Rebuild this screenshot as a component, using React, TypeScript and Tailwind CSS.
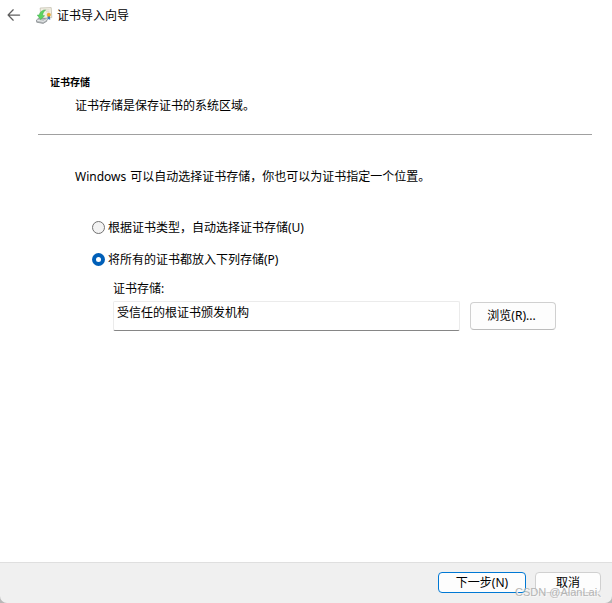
import React from "react";

function BackArrow() {
  return (
    <svg className="ml-[7px] h-[14px] w-[14px]" viewBox="0 0 14 14" fill="none" stroke="#5f5f5f" strokeWidth="1.25" strokeLinecap="round" strokeLinejoin="round">
      <path d="M1.2 7H12.6M6.2 1.8L1.1 7L6.2 12.2" />
    </svg>
  );
}

function CertificateIcon() {
  return (
    <svg className="ml-[15px] h-[17px] w-[17px]" viewBox="0 0 17 17">
      <path d="M4.2 1L15.2 .6L15.8 10.6L4.8 11.4Z" fill="#f3f0e4" stroke="#c4c0b0" strokeWidth=".8" />
      <path d="M7 3L13.5 2.8M10 4.8L13.5 4.7" stroke="#d5d1c3" strokeWidth=".8" />
      <path d="M11.7 9L11.4 13L12.7 12L14.2 13L14 9Z" fill="#3f78b8" />
      <circle cx="12.8" cy="7.8" r="1.8" fill="#f2ad22" stroke="#d8962a" strokeWidth=".4" />
      <path d="M.5 13L3.4 10.6L11 12L10.8 14.2L7.2 16.4L.7 15.2Z" fill="#b9bdbf" stroke="#7d8285" strokeWidth=".7" />
      <path d="M1.1 13.2L7.3 14.4L10.8 12.4" fill="none" stroke="#f1f3f4" strokeWidth=".9" />
      <path d="M9.6 2.9C5.6 3.2 3.6 5.3 3.3 8L1.3 8L4.6 12.6L8.6 8.8L6.5 8.4C6.7 6.2 7.7 4.7 9.6 2.9Z" fill="#5cd460" stroke="#35ad45" strokeWidth=".5" />
    </svg>
  );
}

function Radio({ checked = false, children }: { checked?: boolean; children: React.ReactNode }) {
  return (
    <label className="flex h-4 items-center gap-[3px]">
      {checked ? (
        <span className="flex size-[13px] shrink-0 items-center justify-center rounded-full bg-[#005fb8]">
          <span className="size-[5px] rounded-full bg-white" />
        </span>
      ) : (
        <span className="size-[13px] shrink-0 rounded-full border border-[#727272] bg-[#f3f3f3]" />
      )}
      <span className="pt-0.5">{children}</span>
    </label>
  );
}

export default function App() {
  return (
    <div className="relative flex h-[603px] w-[612px] flex-col overflow-hidden bg-[#b8b8b8] font-['Noto_Sans','Noto_Sans_CJK_SC',sans-serif] text-xs leading-4 whitespace-nowrap text-black">
      <header className="flex h-[30px] shrink-0 items-center bg-white">
        <BackArrow />
        <CertificateIcon />
        <h1 className="ml-1 pt-0.5">证书导入向导</h1>
      </header>
      <main className="flex flex-1 flex-col bg-white">
        <section className="mr-5 ml-[38px] h-[105px] border-b border-[#a0a0a0] pt-11 pl-3">
          <h2 className="text-[10px] leading-4 font-bold">证书存储</h2>
          <p className="mt-2 ml-[25px]">证书存储是保存证书的系统区域。</p>
        </section>
        <p className="mt-[34px] ml-[75px] [word-spacing:1px]">Windows 可以自动选择证书存储，你也可以为证书指定一个位置。</p>
        <div className="mt-[34px] ml-[92px] flex flex-col gap-4">
          <Radio>根据证书类型，自动选择证书存储(U)</Radio>
          <Radio checked>将所有的证书都放入下列存储(P)</Radio>
        </div>
        <div className="mt-[14px] ml-[113px]">
          <div>证书存储:</div>
          <div className="mt-1 flex items-center gap-[10px]">
            <div className="h-[30px] w-[347px] rounded-[2px] border border-[#ebebeb] border-b-[#868686] pt-[3px] pl-[3px]">受信任的根证书颁发机构</div>
            <button className="h-7 w-[86px] rounded-[4px] border border-[#d0d0d0] border-b-[#bcbcbc] bg-[#fdfdfd] pr-[3px]">浏览(R)...</button>
          </div>
        </div>
      </main>
      <footer className="flex h-[41px] shrink-0 items-start gap-[9px] rounded-b-[7px] border-t border-[#dfdfdf] bg-[#f0f0f0] pt-[9px] pl-[438px]">
        <button className="h-[21px] w-[88px] rounded-[4px] border border-[#0078d4] bg-[#fdfdfd] leading-[19px]">下一步(N)</button>
        <button className="h-[21px] w-[66px] rounded-[4px] border border-[#d0d0d0] bg-[#fdfdfd] leading-[19px]">取消</button>
      </footer>
      <div className="absolute top-[584px] left-[515px] font-['Liberation_Sans','Noto_Sans_CJK_SC',sans-serif] text-[11px] text-[#b4b4b4] [text-shadow:1px_1px_0_#f8f8f8]">CSDN @AlanLai、</div>
    </div>
  );
}
